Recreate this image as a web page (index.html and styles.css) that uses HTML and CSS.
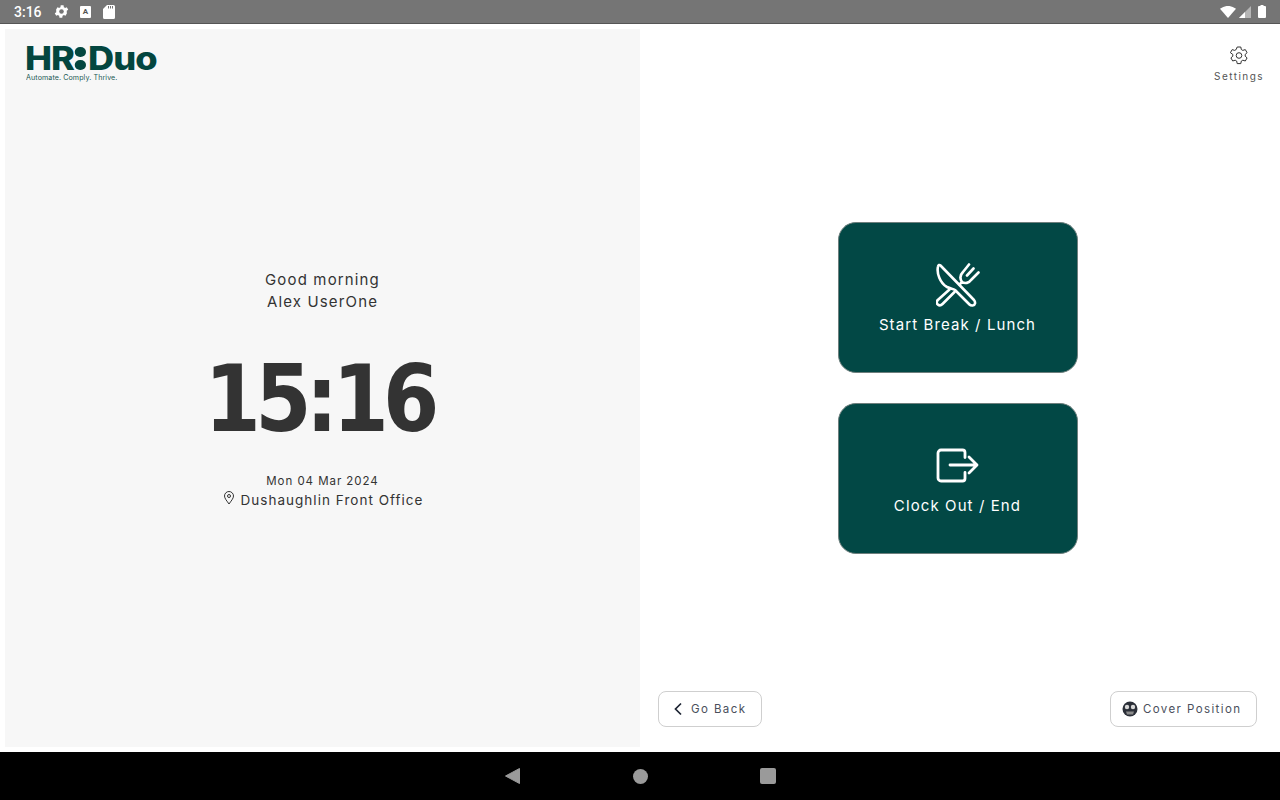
FILE: index.html
```html
<!DOCTYPE html>
<html lang="en">
<head>
<meta charset="utf-8">
<title>HR Duo</title>
<link rel="stylesheet" href="styles.css">
</head>
<body>
<div class="statusbar">
  <div class="status-left">
    <span class="clock">3:16</span>
    <svg class="st-gear" viewBox="0 0 24 24"><path fill="#fff" d="M19.4 13a7.5 7.5 0 0 0 0-2l2.100-1.600-2-3.500-2.500 1a7.500 7.500 0 0 0-1.700-1l-.4-2.700h-4l-.4 2.700a7.500 7.500 0 0 0-1.700 1l-2.500-1-2 3.500L4.600 11a7.500 7.500 0 0 0 0 2l-2.100 1.600 2 3.500 2.500-1a7.500 7.500 0 0 0 1.700 1l.4 2.700h4l.4-2.700a7.500 7.500 0 0 0 1.700-1l2.500 1 2-3.500z"/><circle cx="12" cy="12" r="3.200" fill="#757575"/></svg>
    <span class="st-a">A</span>
    <svg class="st-sd" viewBox="0 0 12 14"><path fill="#fff" d="M4 0h6.500A1.500 1.500 0 0 1 12 1.500v11a1.500 1.500 0 0 1-1.500 1.500h-9A1.500 1.500 0 0 1 0 12.500V4z"/><path fill="#757575" d="M5 1h1v2.500H5zM7 1h1v2.500H7zM9 1h1v2.500H9z"/></svg>
  </div>
  <div class="status-right">
    <svg class="st-wifi" viewBox="0 0 16 12"><path fill="#fff" d="M0 2.800Q8-3 16 2.800L8 12z"/></svg>
    <svg class="st-signal" viewBox="0 0 12 12"><path fill="#b5b5b5" d="M12 0v12H0z"/><path fill="#fff" d="M6 6v6H0z"/></svg>
    <svg class="st-batt" viewBox="0 0 8 13"><path fill="#fff" d="M2.500 0h3v1H7a1 1 0 0 1 1 1v10a1 1 0 0 1-1 1H1a1 1 0 0 1-1-1V2a1 1 0 0 1 1-1h1.500z"/></svg>
  </div>
</div>

<main class="screen">
  <section class="left">
    <div class="logo">
      <div class="logo-word"><span>HR</span><span class="logo-dots"><i></i><i></i></span><span>Duo</span></div>
      <div class="logo-tag">Automate. Comply. Thrive.</div>
    </div>
    <div class="welcome">
      <p class="greet">Good morning</p>
      <p class="greet">Alex UserOne</p>
      <div class="time">15:16</div>
      <p class="date">Mon 04 Mar 2024</p>
      <p class="place">
        <svg class="pin" viewBox="0 0 12 14"><path fill="none" stroke="#333" stroke-width="1" d="M6 13C4 10 1.500 7.500 1.500 5a4.500 4.500 0 0 1 9 0C10.500 7.500 8 10 6 13z"/><circle cx="6" cy="5" r="1.500" fill="none" stroke="#333"/></svg>
        <span>Dushaughlin Front Office</span>
      </p>
    </div>
  </section>

  <section class="right">
    <div class="topbar">
      <div class="settings">
        <svg class="settings-icon" viewBox="0 0 20 20"><path fill="none" stroke="#333" stroke-width="1" stroke-linejoin="round" d="M8.200 1h3.600l.5 2.500 1.500.9 2.500-.8 1.800 3.100-1.900 1.700v1.800l1.900 1.700-1.800 3.100-2.500-.8-1.500.9-.5 2.500H8.200l-.5-2.500-1.500-.9-2.500.8-1.800-3.100 1.900-1.700V8.400L1.400 6.700l1.800-3.100 2.500.8 1.500-.9z"/><circle cx="10" cy="9.500" r="2.800" fill="none" stroke="#333" stroke-width="1"/></svg>
        <span>Settings</span>
      </div>
    </div>
    <div class="actions">
      <button class="action">
        <svg class="action-icon" viewBox="0 0 44 44"><g fill="none" stroke="#fff" stroke-width="2.600" stroke-linejoin="round" stroke-linecap="round"><path d="M2 3.500C.500 10 4 20 11 24c4 2 6 1.500 8 3l14.500 14.500c1.500 1.500 5 1.500 5.500-1 .3-1.500-.2-2.500-1-3.500L4.500 2.500C3.500 1.500 2.300 2 2 3.500z"/><path d="M13.500 26.500 1.800 37c-1.500 1.500-1.300 3.500 0 4.500 1.500 1.300 3.200 1 4.700-.5L18.500 29"/><path d="M33 1.500 27 9c-3 3-3 7-1 10 3 2 7 1 9-2l7.500-7.500M37.500 5.500 31 12.500M26 19l-2.500 2.500"/></g></svg>
        <span>Start Break / Lunch</span>
      </button>
      <button class="action">
        <svg class="action-icon" viewBox="0 0 44 44"><g fill="none" stroke="#fff" stroke-width="2.800" stroke-linejoin="round" stroke-linecap="round"><path d="M29 13.500V8.500A2.500 2.500 0 0 0 26.500 6H5a3 3 0 0 0-3 3v25a3 3 0 0 0 3 3h21.500a2.500 2.500 0 0 0 2.500-2.500V28.500"/><path d="M14 21h27M33 13l8 8-8 8"/></g></svg>
        <span>Clock Out / End</span>
      </button>
    </div>
    <div class="footer">
      <button class="pill pill-back">
        <svg class="chev" viewBox="0 0 10 14"><path fill="none" stroke="#1d2433" stroke-width="1.700" d="M8 1.500 2.500 7 8 12.500"/></svg>
        <span class="pill-text">Go Back</span>
      </button>
      <button class="pill pill-cover">
        <svg class="mask" viewBox="0 0 16 16"><circle cx="8" cy="8" r="7.500" fill="#2b2f38"/><circle cx="5" cy="6" r="2.200" fill="#d8d8d8"/><circle cx="11" cy="6" r="2.200" fill="#d8d8d8"/><path fill="#8c8c8c" d="M4 10.500h8l-1 3H5z"/></svg>
        <span class="pill-text">Cover Position</span>
      </button>
    </div>
  </section>
</main>

<nav class="navbar">
  <span class="nav-cell"><svg class="nav-back" viewBox="0 0 15 16"><path fill="#9a9a9a" stroke="#9a9a9a" stroke-linejoin="round" d="M14.500 .5v15L.5 8z"/></svg></span>
  <span class="nav-cell"><span class="nav-home"></span></span>
  <span class="nav-cell"><span class="nav-recent"></span></span>
</nav>
</body>
</html>
```

FILE: styles.css
```css
* { box-sizing: border-box; }
html, body { margin: 0; padding: 0; }
body {
  width: 1280px;
  height: 800px;
  display: flex;
  flex-direction: column;
  overflow: hidden;
  background: #fff;
  font-family: Inter, "Liberation Sans", sans-serif;
  color: #333;
}
p { margin: 0; }
button { font-family: inherit; cursor: pointer; }

.statusbar {
  height: 24px;
  flex: none;
  background: #757575;
  border-bottom: 1px solid #555;
  display: flex;
  justify-content: space-between;
  align-items: center;
  color: #fff;
}
.status-left { display: flex; align-items: center; padding-left: 14px; }
.clock { font-family: Roboto, sans-serif; font-size: 14px; font-weight: 500; width: 39px; }
.st-gear { width: 17px; height: 17px; margin-right: 10px; }
.st-a {
  width: 11px; height: 12px; background: #fff; color: #555; border-radius: 1px;
  font: 700 8px/12px Roboto, sans-serif; text-align: center; margin-right: 12px;
}
.st-sd { width: 12px; height: 14px; }
.status-right { display: flex; align-items: center; padding-right: 14px; }
.st-wifi { width: 16px; height: 12px; margin-right: 3px; }
.st-signal { width: 12px; height: 12px; margin-right: 7px; }
.st-batt { width: 8px; height: 13px; }

.screen { flex: 1; display: flex; min-height: 0; }

.left {
  width: 635px;
  margin: 5px 0 5px 5px;
  background: #f7f7f7;
  display: flex;
  flex-direction: column;
  position: relative;
}
.logo { padding: 17px 0 0 20px; color: #03463f; }
.logo-word {
  display: flex;
  align-items: center;
  height: 25px;
  font-family: Inter, sans-serif;
  font-weight: 800;
  font-size: 32px;
  line-height: 25px;
  letter-spacing: -.9px;
  transform: scaleX(1.13);
  transform-origin: left center;
}
.logo-dots { display: flex; flex-direction: column; gap: 3px; margin: 0 2px 0 1px; }
.logo-dots i { display: block; width: 9.500px; height: 10px; border-radius: 50%; background: #03463f; }
.logo-tag { font-size: 7.100px; line-height: 8px; margin: 3px 0 0 1px; letter-spacing: .1px; color: #1c5a55; opacity: .999; }

.welcome {
  position: absolute;
  left: 0; right: 0; top: 240px;
  display: flex;
  flex-direction: column;
  align-items: center;
}
.greet { font-size: 15px; line-height: 22px; letter-spacing: 1.150px; font-weight: 380; opacity: .999; }
.time {
  font-family: "DejaVu Sans", sans-serif;
  font-weight: 700;
  font-size: 92px;
  line-height: 110px;
  letter-spacing: -6.500px;
  margin: 32px 6px 17px 0;
  color: #333;
  transform: scaleX(.88);
}
.date { font-size: 11.500px; line-height: 18px; letter-spacing: .95px; font-weight: 400; opacity: .999; }
.place { display: flex; align-items: center; gap: 5px; font-size: 13.500px; line-height: 20px; letter-spacing: 1.030px; font-weight: 400; opacity: .999; }
.pin { width: 12px; height: 14px; margin: -4px 0 0 2px; }

.right { flex: 1; display: flex; flex-direction: column; padding: 0 23px 25px 18px; }
.topbar { height: 59px; display: flex; justify-content: flex-end; }
.settings {
  display: flex; flex-direction: column; align-items: center;
  padding-top: 22px; margin-right: -7px;
  font-size: 10px; line-height: 14px; letter-spacing: 1.450px; color: #555; opacity: .999;
}
.settings-icon { width: 22px; height: 22px; margin-bottom: 3px; }

.actions {
  flex: 1;
  display: flex;
  flex-direction: column;
  align-items: center;
  justify-content: center;
  gap: 30px;
  padding-top: 1px;
}
.action {
  width: 240px;
  height: 151px;
  background: #024845;
  border: 1px solid #6e7f7d;
  border-radius: 18px;
  color: #fff;
  display: flex;
  flex-direction: column;
  align-items: center;
  padding: 40px 0 0;
  font-size: 15px;
  font-weight: 420;
  letter-spacing: 1.100px;
  line-height: 20px;
}
.action span { opacity: .999; }
.action-icon { width: 44px; height: 44px; margin-bottom: 8px; }

.footer { display: flex; justify-content: space-between; align-items: center; height: 36px; }
.pill {
  height: 36px;
  background: #fff;
  border: 1px solid #cfcfcf;
  border-radius: 8px;
  display: flex;
  align-items: center;
  font-size: 11.500px;
  letter-spacing: 1.400px;
  color: #4a4f5c;
  padding: 0;
}
.pill-text { opacity: .999; }
.pill-back { width: 104px; padding-left: 14px; gap: 8px; }
.chev { width: 10px; height: 14px; }
.pill-cover { width: 147px; padding-left: 11px; gap: 5px; }
.mask { width: 16px; height: 16px; }

.navbar {
  height: 48px;
  flex: none;
  background: #000;
  display: flex;
  align-items: center;
  justify-content: center;
}
.nav-cell { width: 128px; display: flex; justify-content: center; align-items: center; }
.nav-back { width: 15px; height: 16px; }
.nav-home { width: 15px; height: 15px; border-radius: 50%; background: #9a9a9a; }
.nav-recent { width: 16px; height: 16px; border-radius: 2px; background: #9a9a9a; }
```
